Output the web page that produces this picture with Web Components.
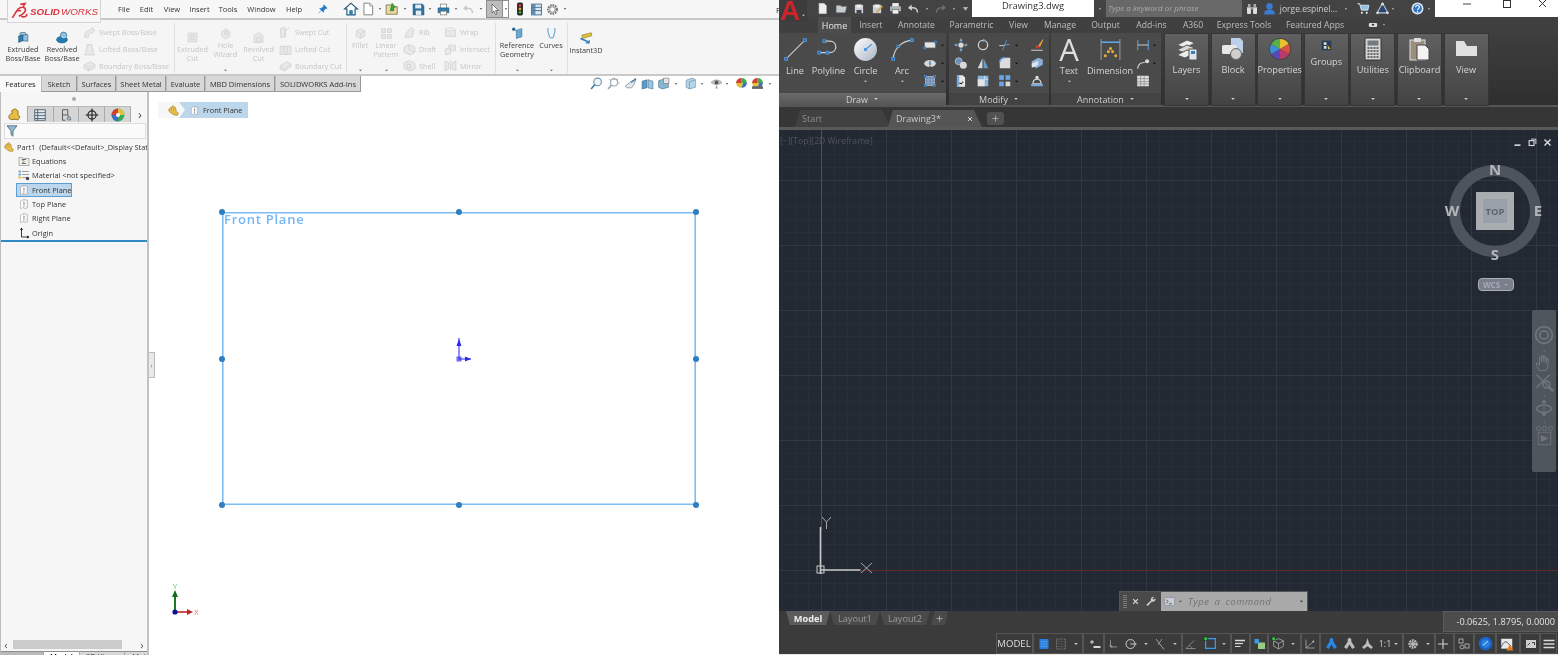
<!DOCTYPE html>
<html><head><meta charset="utf-8"><title>SolidWorks and AutoCAD</title>
<style>
html,body{margin:0;padding:0;width:1558px;height:655px;overflow:hidden;background:#fff}
body{display:flex;font-family:"Open Sans","Noto Sans",sans-serif}
</style></head><body>
<sw-app></sw-app><acad-app></acad-app>
<script>
const gp=d=>`<path d="${d}" fill="#e9e9e9" stroke="#d0d0d0" stroke-width="1.5"/>`;
const st=(d,c='#d4d4d4',w=1.8)=>`<path d="${d}" fill="none" stroke="${c}" stroke-width="${w}"/>`;
const fl=(d,c='#d4d4d4')=>`<path d="${d}" fill="${c}"/>`;
const node=(x,y,c='#4f97dc',r=1.7)=>`<rect x="${x-r}" y="${y-r}" width="${2*r}" height="${2*r}" fill="#2e5f94" stroke="${c}"/>`;
const I={
caret:fl('M5 8h14l-7 8z','currentColor'),
ds:st('M3 20l5-8c3-5 8-7 11-4 2 3-2 8-8 10M13 3l6-1-3 5M9 11h5M14 18c4 2 8 0 7-3','#d9343d',2),
ext:`<path d="M3 9l8-3v12l-8 3z" fill="#2f7fb0" stroke="#174a6b"/><path d="M11 6l9 1v12l-9-1z" fill="#8ec1dc" stroke="#174a6b"/><ellipse cx="11" cy="5" rx="6" ry="2.5" fill="#a8c8dc" stroke="#174a6b"/>`,
rev:`<ellipse cx="11" cy="16" rx="10" ry="6" fill="#1f7cb5" stroke="#144d70"/><ellipse cx="14" cy="8" rx="6" ry="6" fill="#8cc4e2" stroke="#144d70"/><path d="M10 11c3 2 6 2 9 0" stroke="#eef" fill="none"/>`,
sweep:gp('M3 21c0-9 4-12 11-14l3-4 5 5-4 4c-5 1-8 3-8 9z'),
loft:gp('M8 3h8l3 15 2 4H3l2-4z'),
bound:gp('M2 11l12-6 8 5v6l-12 6-8-5z')+st('M2 11l8 5 12-6M10 16v6','#d0d0d0',1.2),
excut:gp('M4 4h16v16H4z')+gp('M9 8h6v8H9z'),
hole:gp('M5 9l8-6 7 6-1 9-7 4-7-5z')+gp('M10 9l5-1 1 5-5 1z'),
revcut:gp('M4 8l8-5 8 5v13H4z')+gp('M9 12h6v9H9z'),
swcut:gp('M3 5l6-3 3 3v15l-9 1z')+st('M20 3c-8 3-10 9-10 16','#d0d0d0',1.5),
locut:gp('M2 6h20v15H2z')+st('M8 6l2 15M16 6l-2 15','#d0d0d0',1.4),
bocut:gp('M2 13l12-8 8 4v5l-12 8-8-4z')+st('M2 13l8 5 12-8','#d0d0d0',1.2),
fillet:gp('M4 8l8-5 8 4v9l-8 5-8-4z')+st('M4 8l8 4 8-5M12 12v9','#d0d0d0',1.2),
lin:gp('M3 3h7v7H3zM14 3h7v7h-7zM3 14h7v7H3zM14 14h7v7h-7z'),
rib:gp('M4 21l2-8 9-10 5 3-3 14z'),
draft:gp('M2 8l9-5 11 5v9l-9 5-11-5z')+st('M11 3v10l11 4','#d0d0d0',1.2),
shell:gp('M2 7l9-4 11 5v10l-9 4-11-5z')+gp('M8 9l6 1v7l-6-1z'),
wrap:gp('M3 6h18v13H3z')+`<ellipse cx="12" cy="6" rx="9" ry="3" fill="#eee" stroke="#d0d0d0"/>`,
inter:gp('M9 4h12v10H9z')+gp('M3 11l9-2v11l-9 2z'),
mirror:gp('M2 4l7 3v11l-7 3z')+gp('M22 4l-7 3v11l7 3z')+st('M12 2v20','#d0d0d0',1.3),
ref:`<path d="M10 6l10-3v15l-10 3z" fill="#69a9d4" stroke="#1f5f8c"/><circle cx="5" cy="4" r="3" fill="#1f5f8c"/><path d="M7 6l3 2" stroke="#1f5f8c"/>`,
curve:st('M6 2c-3 7 2 10 2 16 0 3 8 3 8 0 0-6 4-9 2-16','#3b8ec4',1.7),
inst:`<path d="M5 7L21 3l1 5-16 5z" fill="#e0bf3a" stroke="#8b7a20"/><path d="M3 11l13 6 3-2-1 7-7-1 2-2L2 14z" fill="#3f80b8"/>`,
plane:`<path d="M5 6l7-3v16l-7 2z" fill="#fff" stroke="#8d8d8d"/><path d="M12 3l7 2v15l-7 1" fill="#f3f3f3" stroke="#8d8d8d"/>`+st('M12 8v5M12 15v2','#666',1.4),
part:`<path d="M3 10l8-7 5 4 1 7 4 3-2 4-7-1-8-6z" fill="#e9bd45" stroke="#8c6c1d"/><circle cx="10" cy="9" r="2.2" fill="#f7e6a8" stroke="#8c6c1d"/>`,
sigma:`<path d="M2 5h7l2 2h11v14H2z" fill="#f1efe7" stroke="#6f6f6f"/>`+st('M16 9H8l4 4-4 4h8','#444',1.5),
mat:st('M8 5h14M8 11h14M8 17h8','#8a8a8a',1.6)+`<rect x="1" y="3" width="5" height="4" fill="#7ba9cf"/><rect x="1" y="9" width="5" height="4" fill="#7ba9cf"/><rect x="1" y="15" width="5" height="4" fill="#e4b93e"/><circle cx="19" cy="19" r="3.5" fill="#444"/>`,
origin:st('M7 2v18h15','#222',1.8)+fl('M4 6l3-5 3 5zM18 17l5 3-5 3z','#222'),
home:`<path d="M12 2L1 12h4v10h14V12h4z" fill="#fff" stroke="#22597e" stroke-width="2"/><rect x="9" y="14" width="6" height="8" fill="#2f7fb0"/>`,
doc:`<path d="M5 2h10l5 5v15H5z" fill="#fff" stroke="#777" stroke-width="1.5"/><path d="M15 2v5h5" fill="#ddd" stroke="#777"/>`,
open:`<path d="M2 5h8l2 3h9v13H2z" fill="#e9d9a2" stroke="#78714c" stroke-width="1.4"/><path d="M12 2l6 7-3 0v6h-6z" fill="#3ca43a" stroke="#236e22"/>`,
save:`<path d="M2 2h17l3 3v17H2z" fill="#2f729f" stroke="#1a4c70"/><rect x="6" y="3" width="11" height="7" fill="#e6eef4"/><rect x="7" y="14" width="10" height="8" fill="#e6eef4"/>`,
print:`<rect x="6" y="2" width="12" height="8" fill="#fff" stroke="#555"/><path d="M2 9h20v9H2z" fill="#2f7fb0" stroke="#1a4c70"/><rect x="6" y="15" width="12" height="7" fill="#fff" stroke="#555"/>`,
undo:st('M21 20c0-8-6-11-14-9','#c9c9c9',3)+fl('M9 4L2 11l8 5z','#c9c9c9'),
pointer:`<path d="M6 2l13 13h-6l3 7-3 1-3-7-4 4z" fill="#fff" stroke="#555" stroke-width="1.5"/>`,
traffic:`<rect x="7" y="1" width="10" height="22" rx="3" fill="#222"/><circle cx="12" cy="6" r="2.5" fill="#cf3b30"/><circle cx="12" cy="12" r="2.5" fill="#e2a92d"/><circle cx="12" cy="18" r="2.5" fill="#39a845"/>`,
list:`<rect x="3" y="2" width="18" height="20" fill="#dce8f1" stroke="#2b5f85" stroke-width="1.5"/><path d="M3 8h18M3 14h18M9 2v20" stroke="#2b5f85" stroke-width="1.5"/><rect x="4" y="3" width="4" height="18" fill="#4c87b1"/>`,
gear:`<circle cx="12" cy="12" r="8" fill="none" stroke="#777" stroke-width="4" stroke-dasharray="3 1.6"/><circle cx="12" cy="12" r="5" fill="#fff" stroke="#777" stroke-width="1.5"/>`,
pin:`<path d="M14 2l8 8-4 1-4 4-1 5-9-9 5-1 4-4zM8 15l-6 7" fill="#1f79c2" stroke="#1f79c2" stroke-width="1.4"/>`,
funnel:`<path d="M2 3h20l-8 9v9l-4-3v-6z" fill="#8dbdd9" stroke="#54646e" stroke-width="1.5"/>`,
t1:`<path d="M4 20c-2-4 0-8 5-9l-1-5 6-3 5 4 0 6 3 4-3 5-7-1c-2 1-5 1-8-1z" fill="#e9bd45" stroke="#8c6c1d" stroke-width="1.5"/>`,
t2:`<rect x="3" y="3" width="18" height="18" fill="#dfeaf2" stroke="#4b5d6a" stroke-width="1.5"/><path d="M3 8h18M3 13h18M3 18h18M8 3v18" stroke="#4b5d6a" stroke-width="1.5"/>`,
t3:st('M6 3h9v9H6zM6 12v9h5M15 12l5 9','#555',1.6)+`<circle cx="17" cy="18" r="3" fill="#9cc3df" stroke="#555"/>`,
t4:`<circle cx="12" cy="12" r="7" fill="none" stroke="#222" stroke-width="2"/>`+st('M12 1v22M1 12h22','#222',2),
t5:`<circle cx="12" cy="12" r="11" fill="#3aa856"/><path d="M12 1a11 11 0 0 1 11 11H12z" fill="#e1c03a"/><path d="M1 12a11 11 0 0 0 11 11V12z" fill="#3b6fc4"/><path d="M12 1A11 11 0 0 0 1 12h11z" fill="#d63c32"/><circle cx="12" cy="12" r="3.5" fill="#fff"/>`,
zoomfit:`<circle cx="14" cy="9" r="7" fill="#eef5fa" stroke="#6b8da5" stroke-width="2"/><path d="M9 14l-7 8" stroke="#3e7da8" stroke-width="3"/>`,
zoomarea:`<circle cx="13" cy="10" r="6.5" fill="#fff" stroke="#9aa9b4" stroke-width="2"/><path d="M8 15l-6 7" stroke="#9aa9b4" stroke-width="3"/><path d="M13 1v3M21 3l-2 2M4 4l2 2M23 11h-3" stroke="#888" stroke-width="1.4"/>`,
prev:`<path d="M2 17l10-8 10-5-3 9-5 7H5z" fill="#dfe8ee" stroke="#7d8a94" stroke-width="1.4"/><path d="M22 3l-9 7" stroke="#3e7da8" stroke-width="2.5"/>`,
sect:`<path d="M2 8l9-3v15l-9 2z" fill="#5e9cc6" stroke="#315f7e"/><path d="M13 5l9 3v14l-9-2z" fill="#9cc6df" stroke="#315f7e"/>`,
orient:`<path d="M3 7l11-4 7 3v13l-11 3-7-3z" fill="#86b6d4" stroke="#3a5e78"/><path d="M12 2h10v10H12z" fill="#e5e5e5" stroke="#666"/>`,
dstyle:`<path d="M4 6l11-4 6 3v14l-11 3-6-3z" fill="#b8d6e8" stroke="#4f7b98"/><path d="M10 9l11-4M10 9v13" stroke="#4f7b98"/>`,
eye:`<path d="M2 10c6-6 14-6 20 0-6 5-14 5-20 0z" fill="#c9c9c9" stroke="#777"/><circle cx="12" cy="10" r="3.5" fill="#555"/><path d="M12 14l-2 7 4 0z" fill="#999"/>`,
scene:`<path d="M12 2a10 9 0 0 1 10 9H12z" fill="#4aa84f"/><path d="M12 2a10 9 0 0 0-10 9h10z" fill="#d63c32"/><path d="M2 11a10 9 0 0 0 10 9l3-9z" fill="#e1c03a"/><path d="M15 11h7a10 9 0 0 1-10 9z" fill="#3b6fc4"/>`,
scene2:`<path d="M12 2a10 9 0 0 1 10 9H12z" fill="#4aa84f"/><path d="M12 2a10 9 0 0 0-10 9h10z" fill="#d63c32"/><path d="M2 11a10 9 0 0 0 10 9l3-9z" fill="#e1c03a"/><path d="M15 11h7a10 9 0 0 1-10 9z" fill="#3b6fc4"/><rect x="2" y="17" width="20" height="5" fill="#666"/>`,
line:st('M3 21L21 3','#cfcfcf',1.1)+node(3,21,'#4f97dc',1.3)+node(21,3,'#4f97dc',1.3),
poly:st('M3 15h10c8 0 8-11 0-11H8','#cfcfcf',1.2)+node(3,15,'#4f97dc',1.3)+node(11,15,'#4f97dc',1.3)+node(8,4,'#4f97dc',1.3),
circle:`<defs><linearGradient id="cg" x1="0" y1="0" x2="1" y2="1"><stop offset="0" stop-color="#fff"/><stop offset="1" stop-color="#aab4c4"/></linearGradient></defs><circle cx="12" cy="12" r="11" fill="url(#cg)"/>`+st('M12 12l6-5','#4f97dc',1.2)+node(12,12,'#4f97dc',.9),
arc:st('M3 21C4 10 12 4 21 3','#cfcfcf',1.2)+node(3,21,'#4f97dc',1.3)+node(21,3,'#4f97dc',1.3)+node(8,9,'#4f97dc',1.1),
rect:`<rect x="3" y="7" width="18" height="10" fill="#e4e4e4" stroke="#777"/>`+node(3,17)+node(21,7),
ell:`<ellipse cx="12" cy="13" rx="10" ry="6" fill="#d9d9d9"/><path d="M12 5v16" stroke="#444" stroke-width="2" stroke-dasharray="2 1"/><circle cx="12" cy="13" r="2" fill="#4f97dc"/>`,
hatch:`<rect x="4" y="4" width="16" height="16" fill="#6d87b0" stroke="#ccc"/><path d="M4 10h16M4 15h16M9 4v16M15 4v16" stroke="#a9bddc"/>`+node(4,4)+node(20,4)+node(4,20)+node(20,20),
move:`<circle cx="12" cy="12" r="4.5" fill="#d8d8d8"/><path d="M12 1l3 4H9zM12 23l3-4H9zM1 12l4-3v6zM23 12l-4-3v6z" fill="#63a4e2"/><path d="M12 1v22M1 12h22" stroke="#dcdcdc" stroke-dasharray="2 2"/>`,
rot:`<circle cx="12" cy="12" r="8" fill="none" stroke="#cfcfcf" stroke-width="2.2"/><path d="M12 1l5 3-5 3z" fill="#63a4e2"/>`,
trim:st('M2 13h9','#dcdcdc',1.5)+st('M11 12l9-1','#63a4e2',1.5)+st('M15 3L8 21','#63a4e2',1.3),
erase:`<path d="M14 13L22 2l1 1-6 13z" fill="#e4a23a"/><path d="M8 14l6-2 3 4-5 3z" fill="#c23f2d"/>`+st('M2 21h20','#ddd',1.5),
copy:`<circle cx="8" cy="9" r="6" fill="#6d8fb8" stroke="#ddd"/><circle cx="16" cy="16" r="6" fill="#d8d8d8"/>`,
mir:`<path d="M11 4v17H3z" fill="#d8d8d8"/><path d="M13 4v17h8z" fill="#6a9ed2"/>`,
fil:`<path d="M3 21V11C3 6 7 3 12 3h9v18z" fill="#dcdcdc"/>`+st('M3 11C3 6 7 3 12 3','#63a4e2',2.6),
solid:`<path d="M3 9l11-6 8 3v9l-11 6-8-4z" fill="#8caed2"/><path d="M3 13l11-5v8l-11 4z" fill="#dce4ee"/>`,
stretch:`<path d="M5 2h10l4 4v16H5z" fill="#e8e8e8"/><path d="M3 15h14l-3-3v6z" fill="#222"/><path d="M5 2h4v20H5z" fill="#7aa9da"/>`,
scale:`<rect x="3" y="3" width="18" height="18" fill="#89b4df"/><rect x="3" y="9" width="12" height="12" fill="#e4e4e4"/><path d="M15 3v6h6" stroke="#fff" fill="none"/>`,
array:`<rect x="2" y="2" width="8" height="8" fill="#6aa7e2"/><rect x="13" y="2" width="8" height="8" fill="#6aa7e2"/><rect x="2" y="13" width="8" height="8" fill="#6aa7e2"/><rect x="13" y="13" width="8" height="8" fill="#d8d8d8"/>`,
off:`<path d="M5 17c0-5 3-8 7-8s7 3 7 8z" fill="none" stroke="#dcdcdc" stroke-width="2"/><path d="M2 17h20v4H2z" fill="#7aa9da"/><circle cx="12" cy="6" r="3" fill="#dcdcdc"/>`,
dim:st('M3 2v20M21 2v20','#8a8a8a',1.2)+st('M3 5h18','#63a4e2',1.5)+`<circle cx="7" cy="18" r="1.5" fill="#e3a93a"/><circle cx="10" cy="14" r="1.5" fill="#e3a93a"/><circle cx="14" cy="14" r="1.5" fill="#e3a93a"/><circle cx="17" cy="18" r="1.5" fill="#e3a93a"/><circle cx="12" cy="11" r="1.5" fill="#e3a93a"/>`,
dimh:st('M3 3v18M21 3v18','#63a4e2',1.7)+st('M3 12h18','#dcdcdc',1.5),
lead:st('M3 22c0-9 5-11 12-11','#dcdcdc',1.8)+`<circle cx="19" cy="9" r="3.5" fill="#dcdcdc"/>`,
table:`<rect x="2" y="3" width="20" height="18" fill="#ddd"/><path d="M2 8h20M2 13h20M2 17h20M8 3v18M14 3v18" stroke="#777"/>`,
layers:`<path d="M2 8l10-5 8 3-10 5z" fill="#ececec" stroke="#555"/><path d="M2 13l10-5 8 3-10 5z" fill="#d9d9d9" stroke="#555"/><path d="M2 18l10-5 8 3-10 5z" fill="#ececec" stroke="#555"/><rect x="14" y="12" width="8" height="11" fill="#dfe6ee" stroke="#555"/><rect x="16" y="14" width="4" height="3" fill="#3f79b8"/>`,
block:`<path d="M10 1h9l3 3v12H10z" fill="#bcd0ea"/><rect x="1" y="8" width="15" height="9" rx="1.5" fill="#e8e8e8"/><circle cx="15" cy="17" r="5.5" fill="#cfcfcf" stroke="#666"/>`,
props:`<circle cx="12" cy="12" r="11" fill="#444"/><path d="M12 2a10 10 0 0 1 8.7 5L12 12z" fill="#e5c232"/><path d="M20.7 7a10 10 0 0 1 0 10L12 12z" fill="#d9503f"/><path d="M20.7 17A10 10 0 0 1 12 22V12z" fill="#b93a6e"/><path d="M12 22a10 10 0 0 1-8.7-5L12 12z" fill="#5947b8"/><path d="M3.3 17a10 10 0 0 1 0-10L12 12z" fill="#3d8fd0"/><path d="M3.3 7A10 10 0 0 1 12 2v10z" fill="#5bb04b"/>`,
groups:`<rect x="3" y="3" width="18" height="18" fill="#2e3d55" stroke="#456"/><rect x="7" y="6" width="5" height="5" fill="#ddd"/><rect x="7" y="13" width="5" height="5" fill="#ddd"/><path d="M14 11l5 7-4 1z" fill="#e3c33a"/>`,
util:`<rect x="4" y="1" width="16" height="22" rx="1" fill="#d6d6d6" stroke="#333"/><rect x="6.5" y="3.5" width="11" height="5" fill="#747a80"/><path d="M6.5 11h11M6.5 14h11M6.5 17h11M6.5 20h11" stroke="#444" stroke-width="1.6" stroke-dasharray="2 1"/>`,
clip:`<rect x="3" y="3" width="15" height="20" fill="#9a8f7f" stroke="#ddd"/><rect x="7" y="1" width="7" height="4" fill="#ddd"/><path d="M10 8h8l4 4v11H10z" fill="#f3f3f3" stroke="#444"/>`,
viewp:`<path d="M2 4h8l3 5h10v10H2z" fill="#e0e0e0"/>`,
cam:`<rect x="2" y="6" width="20" height="12" rx="3" fill="#ddd"/><circle cx="12" cy="11" r="3" fill="#333"/>`,
qnew:`<path d="M5 2h10l5 5v15H5z" fill="#eee" stroke="#555"/>`,
qopen:`<path d="M2 6h8l2 2h10l-3 12H2z" fill="#c8cdd2" stroke="#555"/>`,
qsave:`<path d="M3 3h16l2 2v16H3z" fill="#c9cfd6" stroke="#222"/><rect x="7" y="3" width="10" height="6" fill="#eee"/><rect x="7" y="14" width="10" height="7" fill="#444"/>`,
qsaveas:`<path d="M3 3h16l2 2v16H3z" fill="#c9cfd6" stroke="#222"/><rect x="7" y="3" width="10" height="6" fill="#eee"/><path d="M10 18L22 5l2 2-12 13z" fill="#d8a33a"/>`,
qprint:`<rect x="6" y="2" width="12" height="7" fill="#eee"/><rect x="2" y="8" width="20" height="9" rx="1" fill="#aeb4ba"/><rect x="6" y="14" width="12" height="8" fill="#eee" stroke="#555"/>`,
qundo:st('M21 19c0-8-6-11-14-9','#cfd4d9',3)+fl('M9 3L2 10l8 5z','#cfd4d9'),
qredo:st('M3 19c0-8 6-11 14-9','#6e6e6e',3)+fl('M15 3l7 7-8 5z','#6e6e6e'),
qmore:fl('M4 7h16v2H4zM5 11h14l-7 8z','#cfcfcf'),
bino:`<rect x="2" y="8" width="8" height="14" rx="2" fill="#ddd"/><rect x="14" y="8" width="8" height="14" rx="2" fill="#ddd"/><rect x="4" y="2" width="5" height="8" fill="#aaa"/><rect x="15" y="2" width="5" height="8" fill="#aaa"/><rect x="9" y="8" width="6" height="5" fill="#999"/>`,
user:`<circle cx="12" cy="8" r="6" fill="#3a7bd0"/><path d="M2 23c0-7 5-9 10-9s10 2 10 9z" fill="#3a7bd0"/>`,
cart:`<path d="M1 3h4l3 12h12l2-9H6" fill="#8fc0e8" stroke="#dfe9f1" stroke-width="1.6"/><circle cx="9" cy="20" r="2" fill="#dfe9f1"/><circle cx="18" cy="20" r="2" fill="#dfe9f1"/>`,
tri:`<path d="M12 2l10 18H2z" fill="#28466e" stroke="#b9c8da" stroke-width="2"/><circle cx="12" cy="4" r="2.5" fill="#ddd"/><circle cx="3" cy="20" r="2.5" fill="#ddd"/><circle cx="21" cy="20" r="2.5" fill="#ddd"/>`,
help:`<circle cx="12" cy="12" r="11" fill="#dde6ef"/><circle cx="12" cy="12" r="8" fill="#2f73c4"/><path d="M8.5 9.5c0-4 7-4 7 0 0 3-3.500 2.500-3.500 5.500" fill="none" stroke="#fff" stroke-width="2.200"/><circle cx="12" cy="18" r="1.400" fill="#fff"/>`,
mini:st('M4 19h16','#fff',3.5),
rest:`<rect x="3" y="7" width="13" height="13" fill="none" stroke="#ddd" stroke-width="3"/><path d="M8 3h13v13" fill="none" stroke="#ddd" stroke-width="2.5"/>`,
xx:st('M4 4l16 16M20 4L4 20','#e4e4e4',3.5),
cmd:`<rect x="1" y="3" width="22" height="18" rx="2" fill="#c9cdd6" stroke="#7f8695" stroke-width="1.5"/>`+st('M5 8l4 4-4 4M11 17h6','#333',1.6),
wrench:`<path d="M20 2a6 6 0 0 0-7 8L3 19l3 3 9-10a6 6 0 0 0 8-7l-4 3-3-2z" fill="#cfcfcf"/>`,
grid:`<rect x="3" y="2" width="18" height="20" fill="#1b72d8"/><path d="M3 7h18M3 12h18M3 17h18M7.5 2v20M12 2v20M16.5 2v20" stroke="#6fb0f5"/>`,
dots:`<rect x="3" y="2" width="18" height="20" fill="none" stroke="#9b9b9b" stroke-width="1.5" stroke-dasharray="1.5 1.5"/><path d="M3 7h18M3 12h18M3 17h18" stroke="#8f8f8f" stroke-dasharray="1.5 1.5"/>`,
dyn:st('M2 8h8M6 4v8','#d8d8d8',2)+st('M9 18h14','#d8d8d8',4),
ortho:st('M6 3v16h16','#bdbdbd',1.5)+st('M3 16h6v6','#bdbdbd',1.2),
polar:`<circle cx="11" cy="12" r="9" fill="none" stroke="#cfcfcf" stroke-width="2"/>`+st('M11 12h12','#cfcfcf',2)+st('M11 12V3','#5a5a5a',2),
snap:st('M4 2l16 21','#a5a5a5',2)+st('M16 2L8 14','#a5a5a5',1.5),
ang:st('M2 21h19M2 21L18 5','#a5a5a5',1.4)+st('M13 21c0-3-2-5-4-6','#a5a5a5',1.2),
osnap:`<rect x="3" y="3" width="18" height="18" fill="none" stroke="#3f97e8" stroke-width="2.4"/><rect x="0" y="0" width="6" height="6" fill="#2fd03f" stroke="#222"/>`,
lw:st('M2 5h20','#d8d8d8',3)+st('M2 11h16','#d8d8d8',2.5)+st('M2 17h11','#d8d8d8',2),
trans:`<rect x="8" y="9" width="14" height="13" fill="#9bcb80"/><rect x="1" y="2" width="9" height="9" fill="#3f97e8"/>`,
cube3:st('M12 3l9 4v10l-9 5-9-5V7zM3 7l9 5 9-5M12 12v10','#bdbdbd',1.3)+`<rect x="0" y="0" width="6" height="6" fill="#2fd03f" stroke="#222"/>`,
axes:st('M4 3v17h17M4 20L19 7','#bdbdbd',1.4)+fl('M19 4l2 5-5-1z','#bdbdbd'),
anno:`<path d="M12 2a4 4 0 0 1 3 6l7 11-5 3-5-8-5 8-5-3 7-11a4 4 0 0 1 3-6z" fill="#2a87e8"/>`,
anno2:`<path d="M12 2a4 4 0 0 1 3 6l7 11-5 3-5-8-5 8-5-3 7-11a4 4 0 0 1 3-6z" fill="#bdbdbd"/>`,
anno3:`<path d="M12 2l3 10 7 7-3 3-7-5-7 5-3-3 7-7z" fill="#bdbdbd"/>`,
sgear:`<circle cx="12" cy="12" r="7" fill="none" stroke="#bdbdbd" stroke-width="5" stroke-dasharray="3.5 1.5"/><circle cx="12" cy="12" r="4" fill="#bdbdbd"/>`,
plus:st('M12 2v20M2 12h20','#cfcfcf',2.2),
iso:`<rect x="2" y="2" width="8" height="8" fill="none" stroke="#bdbdbd" stroke-width="1.6"/><rect x="14" y="12" width="8" height="8" fill="none" stroke="#bdbdbd" stroke-width="1.6"/><circle cx="8" cy="18" r="4" fill="none" stroke="#bdbdbd" stroke-width="1.6"/>`,
hw:`<circle cx="12" cy="12" r="11" fill="#1a62c4"/><circle cx="12" cy="12" r="7" fill="#2a7fe0"/>`+st('M8 15l8-7','#cfe4ff',1.6),
perf:`<rect x="2" y="3" width="19" height="17" fill="#e8e8e8"/><path d="M2 17c6-13 10-10 17 0" fill="none" stroke="#555" stroke-width="1.6"/><path d="M17 13l6 10H11z" fill="#e37a1e"/>`,
clean:`<rect x="2" y="4" width="20" height="16" fill="#cfcfcf"/><path d="M5 15l5-5M14 9h5v5" stroke="#444" stroke-width="2" fill="none"/>`,
menu:st('M1 5h22M1 12h22M1 19h22','#d8d8d8',2.6),
wheel:`<circle cx="12" cy="12" r="10" fill="none" stroke="#6f757c" stroke-width="2.2"/><circle cx="12" cy="12" r="5" fill="none" stroke="#6f757c" stroke-width="2.2"/>`,
hand:`<path d="M6 22c-2-3-5-7-4-9s3 0 4 2V5l2-1 1 7V2h2l1 9V3l2 0 1 9 1-6 2 1-1 9c0 3-2 6-3 6z" fill="none" stroke="#6f757c" stroke-width="1.500"/>`,
zext:st('M3 3l16 16M19 3L3 19','#6f757c',1.6)+`<circle cx="15" cy="15" r="4" fill="none" stroke="#6f757c" stroke-width="2"/><path d="M18 18l5 5" stroke="#6f757c" stroke-width="3"/>`,
orbit:`<ellipse cx="12" cy="13" rx="10" ry="5" fill="none" stroke="#6f757c" stroke-width="2"/><path d="M12 1l3 4H9zM12 23l3-4H9zM12 3v18" fill="#6f757c" stroke="#6f757c"/>`,
play:`<rect x="2" y="2" width="20" height="20" fill="none" stroke="#6f757c" stroke-width="1.4"/><path d="M6 6l12 6-12 6z" fill="#6f757c"/>`,
};
class XI extends HTMLElement{connectedCallback(){if(this.shadowRoot)return;const s=this.getAttribute('s')||16,h=this.getAttribute('h')||s;
this.attachShadow({mode:'open'}).innerHTML=`<style>:host{display:inline-flex;flex:none;width:${s}px;height:${h}px}svg{display:block;width:100%;height:100%;overflow:visible}</style><svg viewBox="0 0 24 24" preserveAspectRatio="none">${I[this.getAttribute('n')]||''}</svg>`;}}
customElements.define('x-i',XI);
const i=(n,s=16,ml=0,h)=>`<x-i n="${n}" s="${s}"${h?` h="${h}"`:''}${ml?` style="margin-left:${ml}px"`:''}></x-i>`;
const cr=(ml=0,s=6)=>`<x-i n="caret" s="${s}" style="margin-left:${ml}px"></x-i>`;
/* lay items out in flow, each centred on a target x, by margins from the previous item */
const place=(start,items)=>{let p=start,o='';for(const [c,w,h] of items){const l=c-w/2;o+=`<span style="flex:none;display:inline-flex;align-items:center;justify-content:center;width:${w}px;margin-left:${(l-p).toFixed(2)}px;white-space:nowrap">${h}</span>`;p=l+w;}return o;};
const ic=(c,n,s=13)=>[c,s,i(n,s)];
const ca=(c,s=4)=>[c,s,cr(0,s)];

class SwTool extends HTMLElement{connectedCallback(){if(this.shadowRoot)return;const a=n=>this.getAttribute(n),up=this.hasAttribute('caret');
this.attachShadow({mode:'open'}).innerHTML=`<style>:host{display:flex;flex:none;flex-direction:column;align-items:center;width:${a('w')}px;height:56px;box-sizing:border-box;padding:${up?7:(a('pt')||11)}px 0 3px;text-align:center;font-size:7.3px;line-height:8.6px;color:${this.hasAttribute('off')?'#c6c6c6':'#3b3b3b'}}
.t{margin-top:1px;white-space:nowrap}.c{margin-top:auto;color:#666;line-height:0}</style>
${i(a('i'),a('s')||13)}<div class="t"><slot></slot></div>${up?`<div class="c">${cr(0,5)}</div>`:''}`;}}
customElements.define('sw-tool',SwTool);
class SwSmall extends HTMLElement{connectedCallback(){if(this.shadowRoot)return;
this.attachShadow({mode:'open'}).innerHTML=`<style>:host{display:flex;align-items:center;gap:3px;height:17px;font-size:7.3px;color:#c6c6c6;white-space:nowrap}</style>${i(this.getAttribute('i'),13)}<slot></slot>`;}}
customElements.define('sw-small',SwSmall);
class SwRibbon extends HTMLElement{connectedCallback(){
this.attachShadow({mode:'open'}).innerHTML=`<style>:host{display:flex;height:56px;box-sizing:border-box;padding-left:4px;background:#f5f5f5;border-bottom:2px solid #c9c9c9}
.col{display:flex;flex:none;flex-direction:column;padding-top:4px;box-sizing:border-box}
.sep{flex:none;width:1px;height:50px;margin:3px 1px 0;background:#dedede}</style>
<sw-tool w="38" i="ext" pt="11">Extruded<br>Boss/Base</sw-tool>
<sw-tool w="40" i="rev" pt="11">Revolved<br>Boss/Base</sw-tool>
<div class="col" style="width:90px;margin-left:1px">
<sw-small i="sweep">Swept Boss/Base</sw-small><sw-small i="loft">Lofted Boss/Base</sw-small><sw-small i="bound">Boundary Boss/Base</sw-small></div>
<div class="sep"></div>
<sw-tool off w="33" i="excut" pt="11">Extruded<br>Cut</sw-tool>
<sw-tool off caret w="33" i="hole">Hole<br>Wizard</sw-tool>
<sw-tool off w="33" i="revcut" pt="11">Revolved<br>Cut</sw-tool>
<div class="col" style="width:66px;margin-left:4px">
<sw-small i="swcut">Swept Cut</sw-small><sw-small i="locut">Lofted Cut</sw-small><sw-small i="bocut">Boundary Cut</sw-small></div>
<div class="sep"></div>
<sw-tool off caret w="24" i="fillet">Fillet</sw-tool>
<sw-tool off caret w="28" i="lin">Linear<br>Pattern</sw-tool>
<div class="col" style="width:41px;margin-left:3px">
<sw-small i="rib">Rib</sw-small><sw-small i="draft">Draft</sw-small><sw-small i="shell">Shell</sw-small></div>
<div class="col" style="width:50px">
<sw-small i="wrap">Wrap</sw-small><sw-small i="inter">Intersect</sw-small><sw-small i="mirror">Mirror</sw-small></div>
<div class="sep" style="margin-right:2px"></div>
<sw-tool caret w="38" i="ref">Reference<br>Geometry</sw-tool>
<sw-tool caret w="30" i="curve">Curves</sw-tool>
<div class="sep"></div>
<sw-tool w="34" i="inst" s="14" pt="11">Instant3D</sw-tool>`;}}
customElements.define('sw-ribbon',SwRibbon);

class SwTitle extends HTMLElement{connectedCallback(){
const T=(c,w,t)=>[c,w,t];
this.attachShadow({mode:'open'}).innerHTML=`<style>:host{display:flex;align-items:center;height:20px;box-sizing:border-box;background:#f7f7f7;border-bottom:2px solid #c9c9c9;position:relative;z-index:2;font-size:7.5px;color:#333}
.logo{flex:none;box-sizing:border-box;width:94px;height:23px;margin:0 0 -2px 7px;align-self:flex-start;background:#f7f7f7;border:1px solid #d4d4d4;border-top:0;display:flex;align-items:center;gap:1px;padding-left:2px;color:#d9343d;font:italic 700 9.8px "Liberation Sans",sans-serif;white-space:nowrap}
.logo i{font-weight:400;font-style:italic}
.sel{display:flex;align-items:center;justify-content:center;box-sizing:border-box;width:17px;height:18px;background:#bcbcbc;border:1px solid #8d8d8d}
.sel2{display:flex;align-items:center;justify-content:center;box-sizing:border-box;width:6px;height:18px;border:1px solid #8d8d8d;border-left:0;background:#fff}
.p{margin-left:auto;font-size:8px;color:#222;overflow:hidden;width:3px}
</style><div class="logo">${i('ds',19)}SOLID<i>WORKS</i></div>
${place(101,[T(124,14,'File'),T(146.5,14,'Edit'),T(172,17,'View'),T(199.5,20,'Insert'),T(228,19,'Tools'),T(261.5,30,'Window'),T(294,17,'Help'),ic(323,'pin',10),ic(351,'home',14),ic(368,'doc',14),ca(380),ic(392,'open',14),ca(405),ic(418,'save',13),ca(430),ic(443,'print',13),ca(456),ic(468,'undo',12),ca(481),[494.5,17,'<span class="sel">'+i('pointer',12)+'</span>'],[506,6,'<span class="sel2">'+cr(0,4)+'</span>'],ic(520,'traffic',14),ic(536,'list',13),ic(552,'gear',13),ca(565)])}<span class="p">P</span>`;}}
customElements.define('sw-title',SwTitle);

class SwTabs extends HTMLElement{connectedCallback(){
const t=[['Sketch',36],['Surfaces',39],['Sheet Metal',50],['Evaluate',39],['MBD Dimensions',70],['SOLIDWORKS Add-Ins',86]];
this.attachShadow({mode:'open'}).innerHTML=`<style>:host{display:flex;height:16px;background:#fff;font-size:7.5px;color:#333;position:relative}
.f{width:41px;display:flex;align-items:center;justify-content:center;color:#222;background:#f9f9f9}
.t{box-sizing:border-box;display:flex;align-items:center;justify-content:center;background:#d8d8d8;border-right:1px solid #999;border-bottom:1px solid #999;border-left:1px solid #bbb}
.h{display:flex;align-items:center;margin-top:-1px}
</style><div class="f">Features</div>${t.map(([n,w])=>`<div class="t" style="width:${w}px">${n}</div>`).join('')}
<div class="h">${place(361,[ic(596,'zoomfit'),ic(613,'zoomarea'),ic(630,'prev'),ic(647,'sect'),ic(663,'orient'),ca(676),ic(690,'dstyle'),ca(702),ic(716,'eye'),ca(727),ic(741,'scene'),ic(757,'scene2'),ca(770)])}</div>`;}}
customElements.define('sw-tabs',SwTabs);

class SwItem extends HTMLElement{connectedCallback(){if(this.shadowRoot)return;const sel=this.hasAttribute('sel');
this.attachShadow({mode:'open'}).innerHTML=`<style>:host{display:flex;align-items:center;height:14.33px;padding-left:15px;font-size:7.4px;color:#333;white-space:nowrap}
.b{display:flex;align-items:center;gap:2px;height:14px;box-sizing:border-box;padding:0 0 0 1px;${sel?'background:#bcd7ed;border:1px solid #5b9ed3;':'border:1px solid transparent;'}}</style><div class="b">${i(this.getAttribute('i'),12)}<slot></slot></div>`;}}
customElements.define('sw-item',SwItem);

class SwTree extends HTMLElement{connectedCallback(){
this.attachShadow({mode:'open'}).innerHTML=`<style>:host{display:flex;flex-direction:column;flex:none;width:149px;box-sizing:border-box;background:#f6f6f6;border-left:1px solid #bdbdbd;border-right:2px solid #c2c2c2;font-size:7.4px;color:#333;overflow:hidden}
.hd{height:14px;display:flex;align-items:center;justify-content:center}
.dot{width:4px;height:4px;border-radius:50%;background:#aaa}
.tabs{display:flex;height:16px;padding-left:1px}
.tb{box-sizing:border-box;width:26px;display:flex;align-items:center;justify-content:center;background:#d5d5d5;border-right:1px solid #aaa;border-top:1px solid #bbb}
.tb.a{background:#f6f6f6;border-top:0}
.gt{margin-left:2px;display:flex;align-items:center;justify-content:center;width:14px;color:#555;font-size:13px}
.flt{box-sizing:border-box;height:16px;margin:1px 1px 0 3px;background:#fbfbfb;border:1px solid #ddd;display:flex;align-items:center;padding-left:1px}
.root{display:flex;align-items:center;gap:2px;height:14px;margin-top:1px;padding-left:2px;white-space:nowrap;overflow:hidden}
.line{height:2.5px;background:#2f8ac6}
.grow{flex:1}
.sb{display:flex;align-items:center;height:13px;color:#555;font-size:11px}
.th{height:9px;width:109px;background:#cbcbcb;margin:0 15px 0 2px}
.ar{width:10px;text-align:center;line-height:9px}
.bot{display:flex;height:4px;overflow:hidden;background:#d8d8d8;font-size:7.6px;line-height:8px;margin-left:-1px}
.bot div{box-sizing:border-box;border-top:1px solid #8d8d8d;border-right:1px solid #aaa;text-align:center;flex:none}
</style>
<div class="hd"><div class="dot"></div></div>
<div class="tabs"><div class="tb a">${i('t1',14)}</div><div class="tb">${i('t2',14)}</div><div class="tb">${i('t3',14)}</div><div class="tb">${i('t4',14)}</div><div class="tb">${i('t5',14)}</div><div class="gt">›</div></div>
<div class="flt">${i('funnel',12,0,14)}</div>
<div class="root">${i('part',12)}<span>Part1&nbsp; (Default&lt;&lt;Default&gt;_Display State 1&gt;)</span></div>
<sw-item i="sigma">Equations</sw-item><sw-item i="mat">Material &lt;not specified&gt;</sw-item><sw-item i="plane" sel>Front Plane</sw-item><sw-item i="plane">Top Plane</sw-item><sw-item i="plane">Right Plane</sw-item><sw-item i="origin">Origin</sw-item>
<div class="line"></div><div class="grow"></div>
<div class="sb"><span class="ar">‹</span><div class="th"></div><span class="ar">›</span></div>
<div class="bot"><div style="width:44px;background:#b9b9b9"></div><div style="width:36px;background:#fff;font-weight:600;color:#111">Model</div><div style="width:45px">3D Views</div><div style="width:69px">Motion Study 1</div></div>`;}}
customElements.define('sw-tree',SwTree);

class SwCanvas extends HTMLElement{connectedCallback(){
const h=[[0,0],[50,0],[100,0],[0,50],[100,50],[0,100],[50,100],[100,100]];
this.attachShadow({mode:'open'}).innerHTML=`<style>:host{display:block;flex:1;position:relative;background:#fff;overflow:hidden}
.crumb{position:absolute;left:9px;top:10px;width:90px;height:16px;display:flex;align-items:center;background:#f7f7f7;font-size:7.4px;color:#333}
.crumb .a{flex:none;width:21px;height:16px;display:flex;align-items:center;padding-left:9px;box-sizing:border-box}
.crumb .b{flex:1;height:16px;background:#bcd7ec;clip-path:polygon(0 0,100% 0,100% 100%,0 100%,6px 50%);display:flex;align-items:center;gap:3px;padding-left:10px;white-space:nowrap}
.plane{position:absolute;left:73px;top:120px;width:474px;height:293px;box-shadow:inset 0 0 0 1.6px #7dbcf6}
.lab{position:absolute;left:2px;top:0;font:600 13px "Open Sans",sans-serif;letter-spacing:.75px;color:#74b6f6;line-height:15px;white-space:nowrap}
.h{position:absolute;width:6px;height:6px;margin:-3px 0 0 -3px;border-radius:50%;background:#2f7ec2}
.tr{position:absolute;left:304px;top:244px}
.tm{position:absolute;left:18px;top:493px;font:8px "Open Sans",sans-serif}
.col{position:absolute;left:0;top:260px;width:5px;height:24px;background:#e9e9e9;border:1px solid #bbb;border-left:0;color:#777;font-size:7px;display:flex;align-items:center;justify-content:center}
</style>
<div class="crumb"><div class="a">${i('part',13)}</div><div class="b">${i('plane',11)}<span>Front Plane</span></div></div>
<div class="plane"><div class="lab">Front Plane</div>${h.map(([x,y])=>`<div class="h" style="left:${x}%;top:${y}%"></div>`).join('')}</div>
<svg class="tr" width="24" height="30" viewBox="0 0 24 30"><path d="M6 2v21" stroke="#8f8fff" stroke-width="2"/><path d="M6 3l-2.5 7h5z" fill="#2a2ae8"/><path d="M6 23h12" stroke="#8f8fff" stroke-width="2"/><path d="M18 23l-6-2.5v5z" fill="#2a2ae8"/><rect x="3.5" y="20.5" width="5" height="5" fill="#3030e8" opacity=".7"/></svg>
<svg class="tm" width="34" height="36" viewBox="0 0 34 36" style="overflow:visible"><path d="M8 8v19" stroke="#1a7a2a" stroke-width="2"/><path d="M8 5l-3 7h6z" fill="#176a25"/><path d="M8 27h15" stroke="#c93b3b" stroke-width="1.8"/><path d="M26 27l-6-3v6z" fill="#b32a2a"/><circle cx="8" cy="27" r="2.6" fill="#10108e"/><text x="8" y="3.5" font-size="7.5" text-anchor="middle" fill="#5cc06a">Y</text><text x="29.5" y="30" font-size="7.5" text-anchor="middle" fill="#f06a6a">X</text></svg>
<div class="col">›</div>`;}}
customElements.define('sw-canvas',SwCanvas);

class SwApp extends HTMLElement{connectedCallback(){
this.attachShadow({mode:'open'}).innerHTML=`<style>:host{display:flex;flex-direction:column;flex:none;width:779px;height:655px;background:#fff;overflow:hidden;filter:blur(.35px)}
.main{display:flex;flex:1;min-height:0}</style>
<sw-title></sw-title><sw-ribbon></sw-ribbon><sw-tabs></sw-tabs><div class="main"><sw-tree></sw-tree><sw-canvas></sw-canvas></div>`;}}
customElements.define('sw-app',SwApp);

/* ---------- AutoCAD ---------- */
class AcTool extends HTMLElement{connectedCallback(){if(this.shadowRoot)return;const a=n=>this.getAttribute(n);
this.attachShadow({mode:'open'}).innerHTML=`<style>:host{display:flex;flex:none;flex-direction:column;align-items:center;width:${a('w')}px;box-sizing:border-box;padding-top:4px;font-size:9.2px;line-height:11px;color:#d5d5d5;white-space:nowrap}
.ic{height:25px;display:flex;align-items:center;overflow:hidden}.l{margin-top:3px}.c{color:#d5d5d5;line-height:0;margin-top:3px}</style>
<div class="ic">${a('s')=='text'?`<span style="font:400 31px/25px 'Open Sans',sans-serif;color:#dedede;display:block;height:25px">A</span>`:i(a('i'),+a('s')||25)}</div><div class="l"><slot></slot></div>${this.hasAttribute('caret')?`<div class="c">${cr(0,5)}</div>`:''}`;}}
customElements.define('ac-tool',AcTool);
class AcPanel extends HTMLElement{connectedCallback(){if(this.shadowRoot)return;const a=this.hasAttribute('active');
this.attachShadow({mode:'open'}).innerHTML=`<style>:host{display:flex;flex:none;flex-direction:column;height:72px;box-sizing:border-box;width:${this.getAttribute('w')}px;background:#4a4a4a;margin-right:2px}
.b{flex:1;display:flex;min-height:0}.f{height:12px;display:flex;align-items:center;justify-content:center;gap:5px;font-size:9px;color:#cfcfcf;background:${a?'linear-gradient(#6a6a6a,#565656)':'#434343'};box-sizing:border-box}</style>
<div class="b"><slot></slot></div><div class="f">${this.getAttribute('t')}${cr(0,6)}</div>`;}}
customElements.define('ac-panel',AcPanel);
class AcColl extends HTMLElement{connectedCallback(){if(this.shadowRoot)return;const g=this.getAttribute('i')=='groups';
this.attachShadow({mode:'open'}).innerHTML=`<style>:host{display:flex;flex:none;flex-direction:column;align-items:center;width:45px;height:73px;margin-right:1.6px;box-sizing:border-box;background:linear-gradient(#606060,#434343);border:1px solid #363636;padding-top:${g?5:3}px;font-size:9.2px;line-height:11px;color:#d5d5d5;white-space:nowrap}
.l{margin-top:${g?4:3}px}.c{margin-top:auto;line-height:0;margin-bottom:3px}</style>${i(this.getAttribute('i'),g?13:24)}<div class="l"><slot></slot></div><div class="c">${cr(0,6)}</div>`;}}
customElements.define('ac-coll',AcColl);

class AcTop extends HTMLElement{connectedCallback(){
this.attachShadow({mode:'open'}).innerHTML=`<style>:host{display:flex;align-items:center;height:17px;background:#434343;color:#cfcfcf;font-size:9px;position:relative;white-space:nowrap}
.logo{position:absolute;left:0;top:0;width:28px;height:21px;background:#3c3c3c;display:flex;z-index:3}
.logo b{font:700 28px/21px "Liberation Sans",sans-serif;color:#c9252b;width:22px;text-align:center}
.logo x-i{margin:13px 0 0 0}
.ttl{display:block;box-sizing:border-box;width:122px;height:17px;background:#fff;color:#333;text-align:center;line-height:11px;font-size:9.4px}
.s{display:block;box-sizing:border-box;width:136px;height:17px;background:#686868;font:italic 8px/16px "Open Sans",sans-serif;color:#aaa;padding-left:2px;text-align:left}
.win{margin-left:auto;width:123px;height:17px;background:#fff;display:flex;align-items:flex-start;flex:none}
</style><div class="logo"><b>A</b>${cr(0,5)}</div>
${place(779,[ic(822,'qnew'),ic(841,'qopen'),ic(859,'qsave',12),ic(877,'qsaveas',12),ic(895,'qprint'),ic(913,'qundo',12),ca(927),ic(941,'qredo',12),ca(954),ic(965,'qmore',7),[1033,122,'<span class="ttl">Drawing3.dwg</span>'],ca(1100),[1174,136,'<span class="s">Type a keyword or phrase</span>'],ic(1252,'bino',12),ic(1269,'user',13),[1308.5,58,'<span style="font-size:8.5px">jorge.espinel...</span>'],ca(1346),ic(1363,'cart'),ic(1382,'tri'),ca(1393),ic(1417,'help'),ca(1429)])}
<div class="win"><svg width="123" height="12" viewBox="0 0 123 12" style="display:block"><path d="M28 4h8" stroke="#444"/><rect x="68.5" y="0.5" width="7" height="7" fill="none" stroke="#333"/><path d="M104 0l7 7M111 0l-7 7" stroke="#333"/></svg></div>`;}}
customElements.define('ac-top',AcTop);
class AcTabs extends HTMLElement{connectedCallback(){
const T=(c,t)=>[c,t.length*6+4,t];
this.attachShadow({mode:'open'}).innerHTML=`<style>:host{display:flex;align-items:center;height:16px;background:#404040;font-size:8.6px;color:#bdbdbd;white-space:nowrap}
.h{display:flex;align-items:center;justify-content:center;width:33px;height:16px;margin-left:39px;background:#4d4d4d;color:#e8e8e8;box-sizing:border-box;font-size:9px}</style>
<div class="h">Home</div>${place(851,[T(871,'Insert'),T(916.5,'Annotate'),T(971.5,'Parametric'),T(1018.5,'View'),T(1060,'Manage'),T(1105.5,'Output'),T(1151.5,'Add-ins'),T(1193,'A360'),T(1244,'Express Tools'),T(1315,'Featured Apps'),[1373,10,i('cam',10,0,8)],ca(1384)])}`;}}
customElements.define('ac-tabs',AcTabs);
class AcRibbon extends HTMLElement{connectedCallback(){
this.attachShadow({mode:'open'}).innerHTML=`<style>:host{display:flex;height:74px;box-sizing:border-box;background:linear-gradient(#3e3e3e,#2f2f2f);border-bottom:2px solid #565656}
.sm{display:grid;grid-auto-rows:18px;align-items:center;padding-top:3px}
.cell{display:flex;align-items:center}</style>
<ac-panel active w="167" t="Draw"><ac-tool w="32" i="line">Line</ac-tool><ac-tool w="35" i="poly">Polyline</ac-tool><ac-tool w="39" i="circle" caret>Circle</ac-tool><ac-tool w="34" i="arc" caret>Arc</ac-tool>
<div class="sm"><div class="cell">${i('rect',14,4)}${cr(3,5)}</div><div class="cell">${i('ell',14,4)}${cr(3,5)}</div><div class="cell">${i('hatch',14,4)}${cr(3,5)}</div></div></ac-panel>
<ac-panel w="100" t="Modify" style="margin-left:1px"><div class="sm" style="grid-template-columns:22px 22px 32px 22px;padding-left:5px">
<div class="cell">${i('move',14)}</div><div class="cell">${i('rot',14)}</div><div class="cell">${i('trim',14)}${cr(2,5)}</div><div class="cell">${i('erase',14)}</div>
<div class="cell">${i('copy',14)}</div><div class="cell">${i('mir',14)}</div><div class="cell">${i('fil',14)}${cr(2,5)}</div><div class="cell">${i('solid',14)}</div>
<div class="cell">${i('stretch',14)}</div><div class="cell">${i('scale',14)}</div><div class="cell">${i('array',14)}${cr(2,5)}</div><div class="cell">${i('off',14)}</div></div></ac-panel>
<ac-panel w="110" t="Annotation"><ac-tool w="36" s="text" caret>Text</ac-tool><ac-tool w="46" i="dim">Dimension</ac-tool>
<div class="sm" style="padding-left:3px"><div class="cell">${i('dimh',14)}${cr(2,5)}</div><div class="cell">${i('lead',14)}${cr(2,5)}</div><div class="cell">${i('table',14)}</div></div></ac-panel>
<ac-coll i="layers" style="margin-left:1px">Layers</ac-coll><ac-coll i="block">Block</ac-coll><ac-coll i="props">Properties</ac-coll><ac-coll i="groups">Groups</ac-coll><ac-coll i="util">Utilities</ac-coll><ac-coll i="clip">Clipboard</ac-coll><ac-coll i="viewp">View</ac-coll>`;}}
customElements.define('ac-ribbon',AcRibbon);
class AcFiles extends HTMLElement{connectedCallback(){
this.attachShadow({mode:'open'}).innerHTML=`<style>:host{display:flex;align-items:flex-end;height:23px;box-sizing:border-box;background:#363636;border-bottom:3px solid #595959;font-size:9px;color:#a5a5a5}
.t{height:17px;display:flex;align-items:center;box-sizing:border-box;clip-path:polygon(5px 0,calc(100% - 8px) 0,100% 100%,0 100%)}
.s{width:95px;margin-left:16px;background:#414141;padding-left:7px;color:#8d8d8d}
.d{width:94px;margin-left:-2px;background:#555;padding-left:8px;justify-content:space-between;padding-right:9px;color:#c8c8c8}
.p{width:17px;height:13px;margin:0 0 2px 5px;background:#515151;border-radius:3px;display:flex;align-items:center;justify-content:center}</style>
<div class="t s">Start</div><div class="t d">Drawing3*${i('xx',6)}</div><div class="p">${i('plus',7)}</div>`;}}
customElements.define('ac-files',AcFiles);
class AcView extends HTMLElement{connectedCallback(){
this.attachShadow({mode:'open'}).innerHTML=`<style>:host{display:block;flex:1;min-height:0;position:relative;overflow:hidden;background-color:#222933;
background-image:linear-gradient(#303843 1px,transparent 1px),linear-gradient(90deg,#303843 1px,transparent 1px),linear-gradient(#272e38 1px,transparent 1px),linear-gradient(90deg,#272e38 1px,transparent 1px);
background-size:65px 65px,65px 65px,13px 13px,13px 13px;background-position:0 50px,42px 0,0 11px,3px 0}
.lb{position:absolute;left:1px;top:5px;font-size:8.6px;line-height:12px;color:#4f5359}
.g{position:absolute;left:42px;top:0;width:1px;height:400px;background:#2e6a3c}
.r{position:absolute;left:80px;right:0;top:440px;height:1px;background:#5f2a2e}
.ucs{position:absolute;left:36px;top:386px}
.ctl{position:absolute;right:6px;top:8px;display:flex;gap:6px;align-items:center}
.vc{position:absolute;left:661px;top:32px}
.wcs{position:absolute;left:699px;top:148px;width:36px;height:13px;box-sizing:border-box;border:1px solid #aaaeb8;border-radius:4px;background:#7b7e8b;font:700 8px/11px "Open Sans",sans-serif;color:#a7abb6;display:flex;align-items:center;justify-content:center;gap:3px}
.nav{position:absolute;left:753px;top:180px;width:24px;height:162px;box-sizing:border-box;background:#50565e;border-radius:2px;display:flex;flex-direction:column;align-items:center;padding-top:15px;color:#6f757c}
.nav>*{flex:none}
.cmd{position:absolute;left:340px;top:461px;width:189px;height:21px;box-sizing:border-box;display:flex;align-items:center;background:#4a4a4a;border:1px solid #555}
.cb{flex:1;height:19px;background:#a9a9a9;display:flex;align-items:center;font:italic 9.4px "Open Sans",sans-serif;letter-spacing:.6px;word-spacing:2px;color:#727272;padding:0 3px;white-space:nowrap}
i.d{width:5px;height:5px;border-radius:50%;border:1px solid #6f757c;box-sizing:border-box}
</style>
<div class="g"></div><div class="r"></div>
<div class="lb">[−][Top][2D Wireframe]</div>
<div class="ctl">${i('mini',9)}${i('rest',9)}${i('xx',9)}</div>
<svg class="ucs" width="60" height="62" viewBox="0 0 60 62"><path d="M5.500 11v47M5.500 54h40" stroke="#c9c9c9" stroke-width="1.6" fill="none"/><rect x="2" y="50" width="7" height="7" fill="none" stroke="#c9c9c9"/><path d="M7 1l4.500 5 4.500-5M11.500 6v7M46 47l11 10M57 47L46 57" stroke="#a8a8a8" fill="none"/></svg>
<svg class="vc" width="110" height="100" viewBox="0 0 110 100"><circle cx="55" cy="49" r="40.500" fill="none" stroke="#4e545d" stroke-width="11"/><rect x="36" y="30" width="38" height="38" fill="#a9adb0"/><rect x="43" y="37" width="24" height="24" fill="#98a1a9"/><g font-family="Open Sans,sans-serif" font-weight="700" fill="#b3b6ba" text-anchor="middle" font-size="15"><text x="55" y="13">N</text><text x="55" y="98">S</text><text x="12" y="54">W</text><text x="98" y="54">E</text></g><text x="55" y="53" font-family="Open Sans,sans-serif" font-weight="700" font-size="9.500" fill="#5f666e" text-anchor="middle">TOP</text></svg>
<div class="wcs">WCS${cr(0,6)}</div>
<div class="nav">${i('wheel',20)}<div style="margin-top:3px;line-height:0">${cr(0,5)}</div>${i('hand',18)}${i('zext',20)}<div style="margin-top:1px;line-height:0">${cr(0,5)}</div>${i('orbit',18)}<div style="margin-top:2px;line-height:0">${cr(0,5)}</div><div style="display:flex;gap:1px;margin-top:1px"><i class="d"></i><i class="d"></i><i class="d"></i></div>${i('play',15)}</div>
<div class="cmd"><div style="width:4px;height:14px;margin-left:3px;background:repeating-linear-gradient(#7a7a7a 0 1px,#4a4a4a 1px 2px)"></div>${i('xx',7,5)}${i('wrench',11,6)}<div class="cb" style="margin-left:5px">${i('cmd',11)}<span style="color:#444;margin:0 5px 0 3px;line-height:0">${cr(0,5)}</span>Type a command<span style="margin-left:auto;color:#222;line-height:0">${cr(0,5)}</span></div></div>`;}}
customElements.define('ac-view',AcView);
class AcBottom extends HTMLElement{connectedCallback(){
const tab=(t,a)=>`<div class="tb${a?' a':''}">${t}</div>`;
const G=(a,b,items)=>`<div class="g" style="width:${b-a}px">${place(a+1,items)}</div>`;
const IC=(c,n,s=12)=>[c,s,i(n,s)];const CA=c=>[c,6,cr(0,6)];
this.attachShadow({mode:'open'}).innerHTML=`<style>:host{display:block;flex:none;height:43px;background:#3b3b3b;position:relative;color:#ccc;border-bottom:1px solid #e6e6e6}
.top{display:flex;height:22px;align-items:flex-start}
.tabs{display:flex;padding-left:7px;font-size:9.2px;height:14px}
.tb{box-sizing:border-box;height:14px;width:50px;display:flex;align-items:center;justify-content:center;color:#9a9a9a;background:#4a4a4a;clip-path:polygon(0 0,100% 0,calc(100% - 4px) 100%,4px 100%)}
.tb.a{width:44px;background:#5c5c5c;color:#f0f0f0;font-weight:700}
.plus{width:17px;height:14px;margin-left:1px;display:flex;align-items:center;justify-content:center;background:#4a4a4a;clip-path:polygon(4px 0,100% 0,calc(100% - 3px) 100%,0 100%)}
.co{margin-left:auto;box-sizing:border-box;width:115px;height:21px;background:#4c4c4c;border:1px solid #5b5b5b;border-right:0;font-size:9.2px;color:#e2e2e2;display:flex;align-items:center;justify-content:flex-end;padding-right:3px;white-space:nowrap}
.st{display:flex;align-items:center;height:21px;padding-left:217px}
.g{flex:none;box-sizing:border-box;height:21px;display:flex;align-items:center;border:1px solid #555;border-left-width:1px}
</style>
<div class="top"><div class="tabs">${tab('Model',1)}${tab('Layout1')}${tab('Layout2')}<div class="plus">${i('plus',7)}</div></div><div class="co">-0.0625, 1.8795, 0.0000</div></div>
<div class="st">
${G(996,1033,[[1014,34,'<span style="font-size:9.6px;color:#dedede">MODEL</span>']])}
${G(1033,1083,[IC(1044,'grid'),IC(1061,'dots'),CA(1076)])}
${G(1083,1104,[IC(1095,'dyn',12)])}
${G(1104,1182,[IC(1113,'ortho',10),IC(1131,'polar'),CA(1146),IC(1160,'snap'),CA(1175)])}
${G(1182,1231,[IC(1191,'ang'),IC(1210,'osnap',13),CA(1224)])}
${G(1231,1250,[IC(1240,'lw')])}
${G(1250,1268,[IC(1260,'trans')])}
${G(1268,1301,[IC(1278,'cube3',13),CA(1293)])}
${G(1301,1320,[IC(1310,'axes')])}
${G(1320,1403,[IC(1331,'anno',13),IC(1349,'anno2',13),IC(1367,'anno3',13),[1385,12,'<span style="font-size:9px">1:1</span>'],CA(1396)])}
${G(1403,1435,[IC(1413,'sgear'),CA(1428)])}
${G(1435,1454,[IC(1443,'plus')])}
${G(1454,1474,[IC(1464,'iso')])}
${G(1474,1496,[IC(1485,'hw',15)])}
${G(1496,1520,[IC(1507,'perf',14)])}
${G(1520,1540,[IC(1531,'clean')])}
${G(1540,1557,[IC(1549,'menu')])}
</div>`;}}
customElements.define('ac-bottom',AcBottom);
class AcadApp extends HTMLElement{connectedCallback(){
this.attachShadow({mode:'open'}).innerHTML=`<style>:host{display:flex;flex-direction:column;flex:none;width:779px;height:655px;background:#3b3b3b;overflow:hidden;filter:blur(.35px)}</style>
<ac-top></ac-top><ac-tabs></ac-tabs><ac-ribbon></ac-ribbon><ac-files></ac-files><ac-view></ac-view><ac-bottom></ac-bottom>`;}}
customElements.define('acad-app',AcadApp);
</script></body></html>
